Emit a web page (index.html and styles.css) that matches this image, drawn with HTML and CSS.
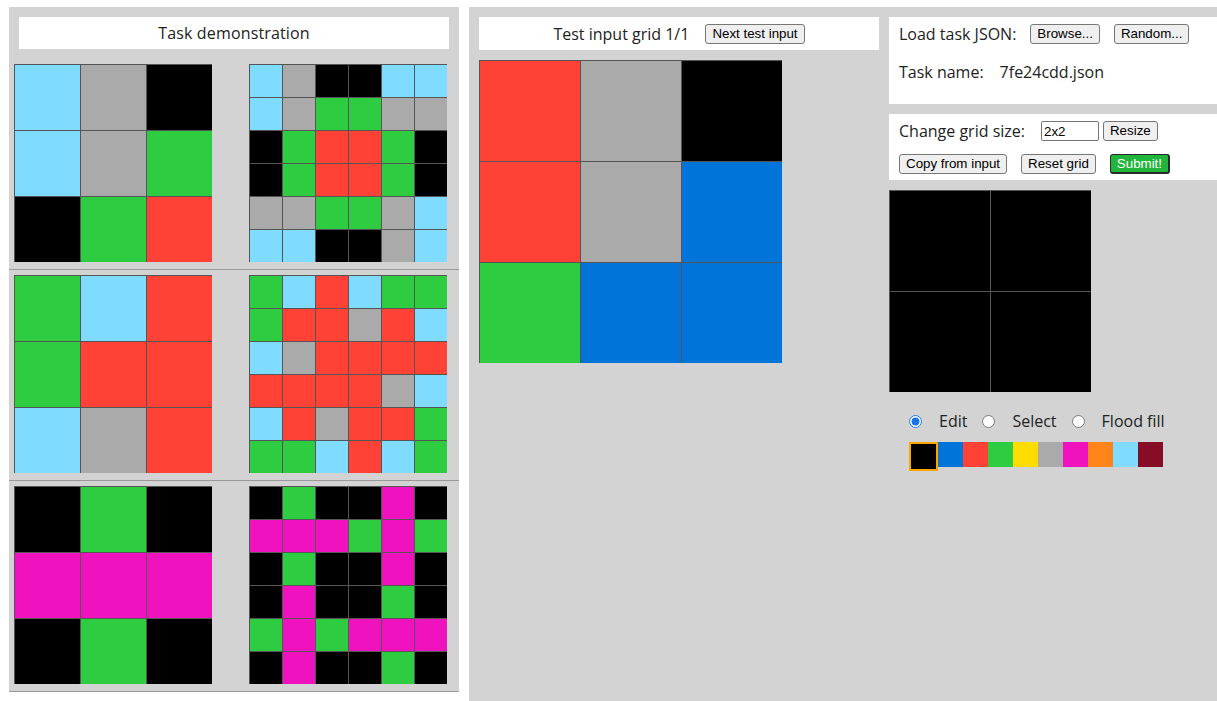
FILE: index.html
```
<!DOCTYPE html>
<html>
<head>
<meta charset="utf-8">
<title>ARC testing interface</title>
<link rel="stylesheet" href="styles.css">
</head>
<body>
<div class="demo">
  <div class="demo-title">Task demonstration</div>
  <div class="pair">
    <div class="grid g3 small">
      <div class="c8"></div><div class="c5"></div><div class="c0"></div>
      <div class="c8"></div><div class="c5"></div><div class="c3"></div>
      <div class="c0"></div><div class="c3"></div><div class="c2"></div>
    </div>
    <div class="grid g6 tiny">
      <div class="c8"></div><div class="c5"></div><div class="c0"></div><div class="c0"></div><div class="c8"></div><div class="c8"></div>
      <div class="c8"></div><div class="c5"></div><div class="c3"></div><div class="c3"></div><div class="c5"></div><div class="c5"></div>
      <div class="c0"></div><div class="c3"></div><div class="c2"></div><div class="c2"></div><div class="c3"></div><div class="c0"></div>
      <div class="c0"></div><div class="c3"></div><div class="c2"></div><div class="c2"></div><div class="c3"></div><div class="c0"></div>
      <div class="c5"></div><div class="c5"></div><div class="c3"></div><div class="c3"></div><div class="c5"></div><div class="c8"></div>
      <div class="c8"></div><div class="c8"></div><div class="c0"></div><div class="c0"></div><div class="c5"></div><div class="c8"></div>
    </div>
  </div>
  <div class="pair">
    <div class="grid g3 small">
      <div class="c3"></div><div class="c8"></div><div class="c2"></div>
      <div class="c3"></div><div class="c2"></div><div class="c2"></div>
      <div class="c8"></div><div class="c5"></div><div class="c2"></div>
    </div>
    <div class="grid g6 tiny">
      <div class="c3"></div><div class="c8"></div><div class="c2"></div><div class="c8"></div><div class="c3"></div><div class="c3"></div>
      <div class="c3"></div><div class="c2"></div><div class="c2"></div><div class="c5"></div><div class="c2"></div><div class="c8"></div>
      <div class="c8"></div><div class="c5"></div><div class="c2"></div><div class="c2"></div><div class="c2"></div><div class="c2"></div>
      <div class="c2"></div><div class="c2"></div><div class="c2"></div><div class="c2"></div><div class="c5"></div><div class="c8"></div>
      <div class="c8"></div><div class="c2"></div><div class="c5"></div><div class="c2"></div><div class="c2"></div><div class="c3"></div>
      <div class="c3"></div><div class="c3"></div><div class="c8"></div><div class="c2"></div><div class="c8"></div><div class="c3"></div>
    </div>
  </div>
  <div class="pair">
    <div class="grid g3 small">
      <div class="c0"></div><div class="c3"></div><div class="c0"></div>
      <div class="c6"></div><div class="c6"></div><div class="c6"></div>
      <div class="c0"></div><div class="c3"></div><div class="c0"></div>
    </div>
    <div class="grid g6 tiny">
      <div class="c0"></div><div class="c3"></div><div class="c0"></div><div class="c0"></div><div class="c6"></div><div class="c0"></div>
      <div class="c6"></div><div class="c6"></div><div class="c6"></div><div class="c3"></div><div class="c6"></div><div class="c3"></div>
      <div class="c0"></div><div class="c3"></div><div class="c0"></div><div class="c0"></div><div class="c6"></div><div class="c0"></div>
      <div class="c0"></div><div class="c6"></div><div class="c0"></div><div class="c0"></div><div class="c3"></div><div class="c0"></div>
      <div class="c3"></div><div class="c6"></div><div class="c3"></div><div class="c6"></div><div class="c6"></div><div class="c6"></div>
      <div class="c0"></div><div class="c6"></div><div class="c0"></div><div class="c0"></div><div class="c3"></div><div class="c0"></div>
    </div>
  </div>
</div>

<div class="workspace">
  <div class="test-col">
    <div class="test-title">
      <span>Test input grid 1/1</span>
      <button class="btn next-btn">Next test input</button>
    </div>
    <div class="grid g3 big test-grid">
      <div class="c2"></div><div class="c5"></div><div class="c0"></div>
      <div class="c2"></div><div class="c5"></div><div class="c1"></div>
      <div class="c3"></div><div class="c1"></div><div class="c1"></div>
    </div>
  </div>

  <div class="edit-col">
    <div class="box load-box">
      <div class="row">
        <span>Load task JSON:</span>
        <button class="btn gap14">Browse...</button>
        <button class="btn gap14">Random...</button>
      </div>
      <div class="row row-name">
        <span>Task name:</span>
        <span class="task-file">7fe24cdd.json</span>
      </div>
    </div>
    <div class="box size-box">
      <div class="row">
        <span>Change grid size:</span>
        <input class="size-input gap16" type="text" value="2x2">
        <button class="btn gap4">Resize</button>
      </div>
      <div class="row row-actions">
        <button class="btn">Copy from input</button>
        <button class="btn gap14">Reset grid</button>
        <button class="btn submit gap14">Submit!</button>
      </div>
    </div>
    <div class="grid g2 big out-grid">
      <div class="c0"></div><div class="c0"></div>
      <div class="c0"></div><div class="c0"></div>
    </div>
    <div class="tools">
      <div class="modes">
        <input class="radio" type="radio" name="mode" checked>
        <span class="mode-label">Edit</span>
        <input class="radio" type="radio" name="mode">
        <span class="mode-label">Select</span>
        <input class="radio" type="radio" name="mode">
        <span class="mode-label">Flood fill</span>
      </div>
      <div class="palette">
        <div class="swatch c0 selected"></div>
        <div class="swatch c1"></div>
        <div class="swatch c2"></div>
        <div class="swatch c3"></div>
        <div class="swatch c4"></div>
        <div class="swatch c5"></div>
        <div class="swatch c6"></div>
        <div class="swatch c7"></div>
        <div class="swatch c8"></div>
        <div class="swatch c9"></div>
      </div>
    </div>
  </div>
</div>
</body>
</html>
```

FILE: styles.css
```
html, body {
  overflow: hidden;
}
body {
  margin: 7px 0 0 9px;
  font-family: "Open Sans", "Noto Sans", sans-serif;
  font-size: 16px;
  color: #222;
  display: flex;
  align-items: flex-start;
  gap: 10px;
  background: #fff;
}

/* colours */
.c0 { background: #000000; }
.c1 { background: #0074D9; }
.c2 { background: #FF4136; }
.c3 { background: #2ECC40; }
.c4 { background: #FFDC00; }
.c5 { background: #AAAAAA; }
.c6 { background: #F012BE; }
.c7 { background: #FF851B; }
.c8 { background: #7FDBFF; }
.c9 { background: #870C25; }

/* grids */
.grid {
  display: grid;
  gap: 1px;
  background: #555;
  padding: 1px 0 0 1px;
  width: max-content;
}
.g2 { grid-template-columns: repeat(2, auto); }
.g3 { grid-template-columns: repeat(3, auto); }
.g6 { grid-template-columns: repeat(6, auto); }
.small > div { width: 65px; height: 65px; }
.tiny > div { width: 32px; height: 32px; }
.big > div { width: 100px; height: 100px; }

/* left panel */
.demo {
  width: 450px;
  background: #d3d3d3;
  flex: none;
}
.demo-title {
  margin: 10px 10px 10px 10px;
  height: 32px;
  background: #fff;
  display: flex;
  align-items: center;
  justify-content: center;
  padding-bottom: 1px;
  box-sizing: border-box;
  letter-spacing: 0.15px;
}
.pair {
  display: flex;
  gap: 37px;
  padding: 5px 0 7px 5px;
  border-bottom: 1px solid #999;
}

/* workspace */
.workspace {
  flex: none;
  width: 748px;
  height: 694px;
  box-sizing: border-box;
  background: #d3d3d3;
  padding: 10px 0 0 10px;
  display: flex;
  gap: 10px;
  align-items: flex-start;
}
.test-col {
  width: 400px;
  flex: none;
}
.test-title {
  height: 33px;
  background: #fff;
  display: flex;
  align-items: center;
  justify-content: center;
  margin-bottom: 10px;
}

.edit-col {
  width: 328px;
  flex: none;
}
.box {
  background: #fff;
  padding: 0 10px;
}
.row {
  display: flex;
  align-items: center;
  height: 20px;
}
.load-box {
  padding-top: 7px;
  padding-bottom: 22px;
}
.row-name {
  margin-top: 18px;
}
.task-file {
  margin-left: 16px;
}
.size-box {
  margin-top: 10px;
  padding-top: 7px;
  padding-bottom: 6px;
}
.row-actions {
  margin-top: 13px;
}

.btn {
  font-family: "Liberation Sans", Arial, sans-serif;
  font-size: 13.33px;
  height: 20px;
  padding: 0 6px;
  margin: 0;
  background: #efefef;
  color: #000;
  border: 1px solid #767676;
  border-radius: 3px;
  box-sizing: border-box;
  line-height: 18px;
  white-space: nowrap;
}
.btn.submit {
  background: #21b53c;
  color: #fff;
  border: 1px solid #2a2a2a;
  border-bottom-width: 2px;
  border-right-width: 2px;
  border-radius: 3px;
  line-height: 17px;
}
.size-input {
  font-family: "Liberation Sans", Arial, sans-serif;
  font-size: 13.33px;
  width: 58px;
  height: 20px;
  box-sizing: border-box;
  padding: 0 2px;
  margin: 0;
  border: 1px solid #767676;
  border-radius: 2px;
  color: #000;
  background: #fff;
}

.row .gap14 { margin-left: 14px; }
.row .gap16 { margin-left: 16px; }
.row .gap4 { margin-left: 4px; }
.test-title .next-btn { margin-left: 16px; }

.out-grid {
  margin-top: 10px;
}

.tools {
  padding-left: 20px;
}
.modes {
  display: flex;
  align-items: center;
  height: 18px;
  margin-top: 20px;
}
.radio {
  width: 13px;
  height: 13px;
  margin: 0;
  accent-color: #1a73e8;
}
.mode-label {
  margin-left: 17px;
  margin-right: 15px;
  color: #222;
}
.palette {
  display: flex;
  align-items: flex-start;
  margin-top: 12px;
}
.swatch {
  width: 25px;
  height: 25px;
}
.swatch.selected {
  border: 2px solid #FFA500;
}
```
